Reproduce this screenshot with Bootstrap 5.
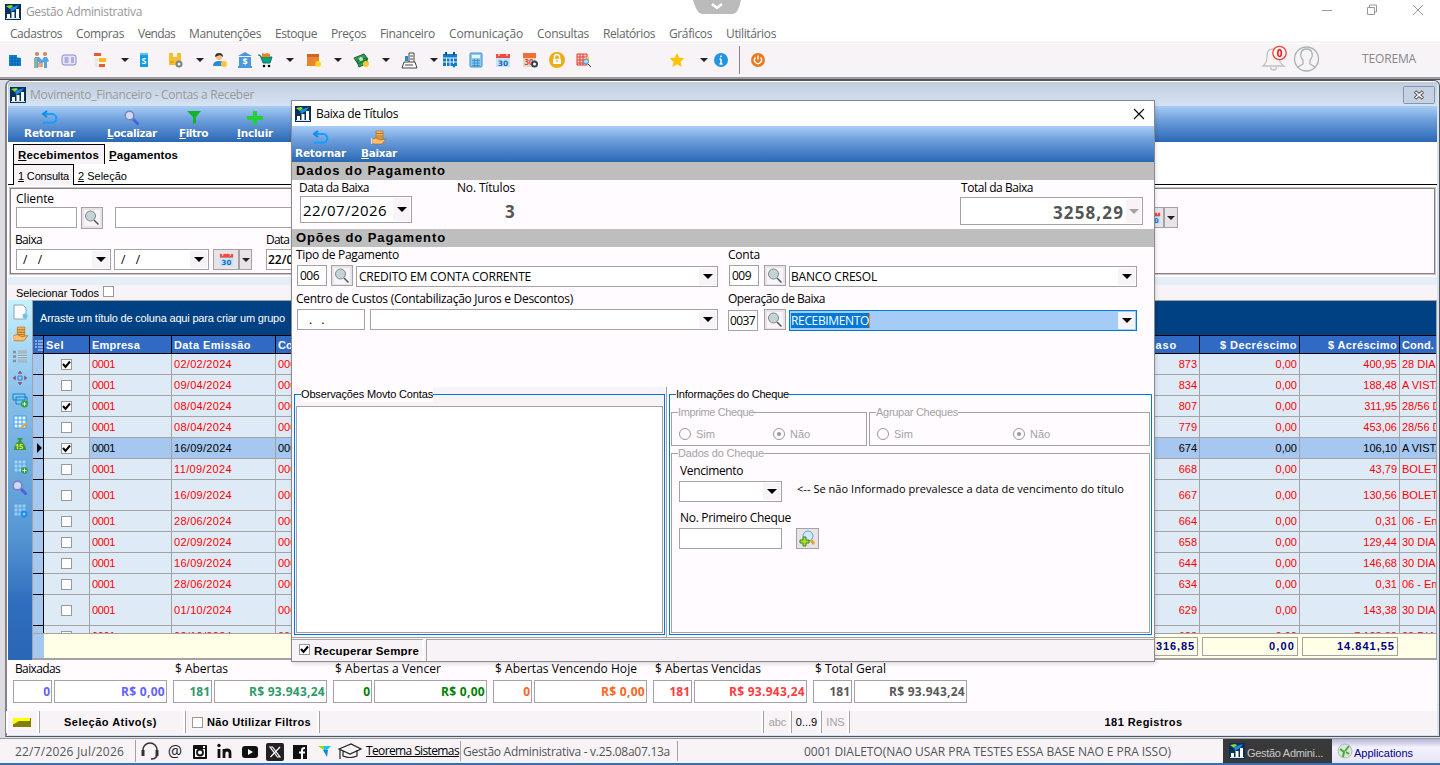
<!DOCTYPE html>
<html lang="pt-BR">
<head>
<meta charset="utf-8">
<title>Gestão Administrativa</title>
<link href="https://cdn.jsdelivr.net/npm/bootstrap@5.3.0/dist/css/bootstrap.min.css" rel="stylesheet">
<style>
body{width:1440px;height:765px;overflow:hidden;background:#fff;color:#000;font:12px/16px "Open Sans","Noto Sans",sans-serif;white-space:nowrap}
svg{display:block;flex:none}
.ms{font-family:"Liberation Sans",sans-serif;font-size:11px}
.pane{background:#f7f3f7}
.pearl{background:#fffbff}
.app-title{height:23px;color:#999}
.menu-row{height:18px;color:#666;padding:3px 0 0 10px;gap:14px}
.tools{height:36px;background:#f7f3f7;box-shadow:inset 0 2px #f7f3f7,inset 0 3px #fff}
.tool-grid{display:grid;grid-template-columns:26px 28px 31px 29px 15px 31px 29px 16px 25px 20px 29px 19px 29px 19px 29px 19px 29px 12px 26px 27px 27px 27px 27px 93px 31px 13px 26px 11px 16px;width:760px;align-items:center;padding:2px 0 0 7px}
.dn{width:0;height:0;border:4px solid transparent;border-top:4px solid #222;border-bottom:0;flex:none}
.frame{height:658px;border-left:5px solid #dcdce2;background:#d6e4f4}
.inner{border:1px solid #555;border-left:2px solid #848488;border-radius:6px 6px 0 0;box-shadow:inset 1px 1px #fff;height:657px;padding:1px 2px 0 1px}
.win-title{height:24px;background:linear-gradient(#c1cddc,#d5e3f4);color:#999}
.blue-bar{height:36px;background:linear-gradient(#a8cdf6,#6c9edb 40%,#2a68b5);color:#fff;font-family:"DejaVu Sans","Open Sans",sans-serif;font-weight:700;font-size:10.5px}
.act{display:flex;flex-direction:column;align-items:center;text-shadow:0 1px 1px #3568a0}
.act span{line-height:15px}
.tab-a{border:1px solid #000;border-bottom:0}
.groove{border:1px solid #848284;outline:1px solid #c8c6c8}
.fld{border:1px solid #a5a2a5;background:#fff;display:flex;align-items:center;flex:none;padding:0 4px;overflow:hidden}
.cbt{background:#f7f3f7;align-self:stretch;display:flex;align-items:center;justify-content:center;width:17px;margin:1px -3px 1px auto;flex:none}
.cbt:before{content:"";border:5px solid transparent;border-top-color:#000;border-bottom:0}
.off .cbt:before{border-top-color:#a5a2a5}
.btx{border:1px solid #a5a2a5;background:#e7e3e7;display:flex;align-items:center;justify-content:center;flex:none}
.chk{width:11px;height:11px;border:1px solid #999;background:#fff;flex:none;display:flex;align-items:center;justify-content:center}
.big{font-family:"Open Sans","Noto Sans",sans-serif;font-weight:700;font-size:17px;color:#555}
.side{width:24px;background:linear-gradient(#c6f1ff,#86bde9 28%,#5596d3 65%,#2e6cbd 85%,#2a68b5);padding-top:1px}
.side div{height:22px;display:flex;align-items:center;justify-content:center}
.grp{height:35px;background:#004184;color:#fff;border-top:1px solid #a5a2a5}
.tr0{display:flex}
.tr0>*{flex:none;border-right:1px solid #a5a2a5;border-bottom:1px solid #a5a2a5;display:flex;align-items:center;overflow:hidden;padding:0 2px}
.hd{height:19px;border-top:1px solid #000;background:#316ac5;color:#fff;font-weight:700}
.hd>*{border-color:#000}
.rw{background:#deebf7;color:#f00}
.rw>:first-child{background:#a5c7f0;border-color:#000}
.c0{width:11px}.c1{width:46px}.c2{width:82px}.c3{width:104px}.c4{width:724px}.c5{width:200px}.c6{width:100px}.c7{width:100px}.c8{width:37px}
.cur{color:#000}.cur>:nth-child(n+3){background:#a5c7f0}
.rows{height:279px;overflow:hidden}
.foot{height:25px;background:#ffffe7;color:#000084;border-top:1px solid #a5a2a5;font-weight:700}
.foot .fld{background:#ffffe7;height:19px;justify-content:flex-end;padding:0 2px}
.sb{border-left:1px solid #a5a2a5;display:flex;align-items:center;justify-content:center;flex:none;height:22px;box-shadow:-2px 0 #fff}
.dlg{position:absolute;left:291px;top:100px;width:864px;height:562px;border:1px solid #8a8a8e;box-shadow:1px 2px 4px #0002}
.sec{height:18px;background:#bdbebd;font:700 13px/17px "Liberation Sans",sans-serif;padding-left:4px}
.fs{border:1px solid #a5a2a5;position:relative}
.fs>.lg{position:absolute;left:6px;top:-8px;line-height:15px;background:#fffbff;color:#a5a2a5}
.fs.bl{border-color:#0078d7}.fs.bl>.lg{color:#000}
.rd{width:12px;height:12px;border:1px solid #999;border-radius:50%;flex:none;display:flex;align-items:center;justify-content:center}
.rd.on:after{content:"";width:4px;height:4px;border-radius:50%;background:#999}
.taskbar{height:27px;background:#f7f3f7;border-top:1px solid #999;border-bottom:2px solid #3970b8;color:#555}
</style>
</head>
<body>
<svg width="0" height="0" class="position-absolute">
<symbol id="logo" viewBox="0 0 16 16"><path fill="#07305c" d="M0 0h16v16H0z"/><path fill="#fff" d="M2 10h3v4H2zM6.500 8h3v6h-3zM11 5h3v9h-3z"/><path d="M1 2l5-1 2 1-3 3z" fill="#8ddb28"/><path d="M5 4l6-2 3-1-3 4-5 3z" fill="#1b8be0"/><path d="M1 14.500h14" stroke="#dbe7f5"/></symbol>
<symbol id="ret" viewBox="0 0 16 14"><path d="M3 3h7a4.300 4.300 0 010 8.700H1" fill="none" stroke="#13a0ff" stroke-width="2"/><path d="M5 0L1 3l4 3" fill="none" stroke="#1188ee" stroke-width="2"/></symbol>
<symbol id="mag" viewBox="0 0 16 16"><path d="M9 9l5.500 5.500" stroke="#4f62d8" stroke-width="3"/><circle cx="5.500" cy="5.500" r="4.300" fill="#d3d8f8" stroke="#7b83b8" stroke-width="1.500"/></symbol>
<symbol id="mg2" viewBox="0 0 16 16"><path d="M0 0h16v16H0z" fill="#f7f5f7"/><path d="M10 10l4.500 4.500" stroke="#555" stroke-width="1.500"/><circle cx="6.500" cy="6" r="5" fill="#c5d3d6" stroke="#7d898c"/></symbol>
<symbol id="hand" viewBox="0 0 16 16"><path d="M5 1h7v9H5z" fill="#f4b556" stroke="#a86a20" stroke-width=".6"/><path d="M5 3.500h7M5 6h7M5 8h7" stroke="#b87322"/><path d="M1 9l4-1 4 2 6-1-4 5H3L1 13z" fill="#ffbf6b" stroke="#9b6023" stroke-width=".6"/><path d="M.5 8v6" stroke="#dde" stroke-width="1.500"/></symbol>
<symbol id="cal" viewBox="0 0 16 16"><path d="M1 3h14v12H1z" fill="#c3e3ff"/><path d="M1 2h14v4H1z" fill="#ef4b3e"/><path d="M4 1v3M12 1v3" stroke="#fff"/><text x="8" y="13.500" font-size="7.500" font-weight="700" text-anchor="middle" fill="#1769ba" font-family="DejaVu Sans">30</text></symbol>
<symbol id="tbl" viewBox="0 0 16 16"><path d="M2 2h12v12H2zM2 6h12M2 10h12M6 2v12M10 2v12" fill="#e8f6ff" stroke="#41a3e8"/></symbol>
<symbol id="gcal" viewBox="0 0 16 16"><path d="M1 2h14v12H1z" fill="#1679c8"/><path d="M1 6h14M4.500 6v8M8 6v8M11.500 6v8M1 10h14" stroke="#e0f2ff"/><path d="M4 0v3M12 0v3" stroke="#0b4d94" stroke-width="2"/><path d="M9 12h6l-3 4z" fill="#087fc4"/></symbol>
</svg>

<header>
 <div class="app-title d-flex align-items-center" style="padding-left:5px">
  <svg width="16" height="16"><use href="#logo"/></svg><span data-w="116" style="margin-left:5px">Gestão Administrativa</span>
  <svg class="ms-auto" width="752" height="23" viewBox="0 0 752 23" fill="none" stroke="#999"><path d="M5 0h48q-3 14-8 14H14q-5 0-9-14z" fill="#bbb" stroke="none"/><path d="M24 4l5 4 5-4" stroke="#fff" stroke-width="2.500"/><path d="M634 10.500h10M679.500 7.500h7v7h-7zM681.500 7v-2h7v7h-2M725 5l10 10M735 5l-10 10"/></svg>
 </div>
 <nav class="menu-row d-flex align-items-center" id="menu"></nav>
 <div class="tools d-flex align-items-center">
  <div class="tool-grid">
   <svg width="16" height="16"><path d="M2 3h8v3h4v8H2z" fill="#1088dd"/><path d="M2 6h11M2 9h12M2 12h12M5 3v11M8 3v11M11 6v8" stroke="#0b4e8d" stroke-width=".6"/></svg>
   <svg width="17" height="18"><circle cx="4" cy="3" r="2" fill="#c88a50"/><circle cx="12" cy="3" r="2" fill="#c88a50"/><path d="M2 6h4l3 3 2-3h3l2 4-2 1v6h-3v-6l-3 2-3-2v6H1z" fill="#5aa3dc"/><path d="M1 7h3v10H1z" fill="#91b39c"/><path d="M5 12h5v4H5z" fill="#e9a577"/></svg>
   <svg width="16" height="16"><rect x="1" y="3" width="14" height="10" rx="2" fill="#e5e4fb" stroke="#8b8bd0"/><path d="M3.500 6h4M3.500 8h4M3.500 10h4M10 6h3M10 8h3M10 10h3" stroke="#7777c3"/></svg>
   <svg width="16" height="16"><path d="M2 1h7v3H2zM7 12h6v3H7z" fill="#e9592b"/><path d="M7 6h7v4H7z" fill="#ffb817"/><path d="M4 5v9h3M4 8h3" fill="none" stroke="#ddd"/></svg>
   <i class="dn"></i>
   <svg width="16" height="16"><path d="M4 1h8v14H4z" fill="#149ae6"/><path d="M4 1h8v2H4z" fill="#54c3ff"/><text x="8" y="12" font-size="9" font-weight="700" text-anchor="middle" fill="#fff">S</text></svg>
   <svg width="16" height="16"><path d="M2 1h4v4h4V1h4v12H2z" fill="#f6c02c"/><path d="M3 10h4" stroke="#d58c00"/><circle cx="12" cy="12" r="2.500" fill="#eee" stroke="#76828d" stroke-width="2"/></svg>
   <i class="dn"></i>
   <svg width="16" height="16"><circle cx="7" cy="5" r="3" fill="#ffbe78"/><path d="M3 5q0-4 4-4t4 4L8 3z" fill="#333"/><path d="M1 14q0-5 6-5t6 5z" fill="#2d88d8"/><circle cx="12" cy="12" r="3" fill="#ffc534"/></svg>
   <svg width="16" height="16"><path d="M8 0l7 4H1zM2 5h12v9H2zM1 14h14v2H1z" fill="#4a99df"/><text x="8" y="13" font-size="9" font-weight="700" text-anchor="middle" fill="#fff">$</text></svg>
   <svg width="16" height="16"><path d="M1 3h2l3 8h7l2-6H4" fill="#0aa183" stroke="#087b68"/><path d="M5 1l3 1 2-1 3 1v3H5z" fill="#ee8321"/><circle cx="7" cy="14" r="1.300"/><circle cx="12" cy="14" r="1.300"/></svg>
   <i class="dn"></i>
   <svg width="16" height="16"><path d="M2 2h12v12H2z" fill="#ea842e"/><path d="M2 2h12v3H2z" fill="#ca6528"/><circle cx="13" cy="12" r="3" fill="#ffd32c"/></svg>
   <i class="dn"></i>
   <svg width="17" height="16"><path d="M1 6l10-4 4 5-10 5zM4 9l9-3 2 5-9 4z" fill="#329b54" stroke="#146735"/><circle cx="8" cy="7" r="2" fill="#bde9bf"/><circle cx="13" cy="12" r="3" fill="#ffc534"/></svg>
   <i class="dn"></i>
   <svg width="17" height="17"><path d="M3 10h11l2 6H1zM8 10V1h5v9M9 4h3M9 7h3M4 13h8" fill="#fff" stroke="#444"/><path d="M4 4h3v5H4z" fill="#238bd2"/></svg>
   <i class="dn"></i>
   <svg width="16" height="16"><use href="#gcal"/></svg>
   <svg width="16" height="16"><rect x="2" y="1" width="12" height="14" rx="1" fill="#8bc9ef" stroke="#3f91cc"/><path d="M4 3h8v3H4z" fill="#e6f6ff"/><path d="M4 8.500h8M4 11h8M4 13.500h8M6.500 7v8M9.500 7v8" stroke="#2d80bd" stroke-width=".7"/></svg>
   <svg width="16" height="16"><use href="#cal"/></svg>
   <svg width="17" height="16"><path d="M1 3h13v12H1z" fill="#e2d8d0"/><path d="M1 1h13v5H1z" fill="#ef6f35"/><text x="7" y="13" font-size="8" font-weight="700" text-anchor="middle" fill="#e7492f">30</text><circle cx="12.500" cy="12" r="2.500" fill="#fff" stroke="#344552" stroke-width="2"/></svg>
   <svg width="16" height="16"><circle cx="8" cy="8" r="8" fill="#efad13"/><rect x="4" y="7" width="8" height="5" fill="#fff"/><path d="M5.500 7V5a2.500 2.500 0 015 0v2" fill="none" stroke="#fff" stroke-width="1.500"/><path d="M8 8v2" stroke="#d58c00"/></svg>
   <svg width="17" height="16"><path d="M1 2h10v11H1zM1 5h10M1 8h10M1 11h10M4 2v11M7 2v11" fill="#ffd6ce" stroke="#df3d30"/><path d="M11 11l4 4" stroke="#333"/><path d="M10 5h3v6h-3z" fill="#ffc534"/><circle cx="10" cy="9.500" r="2.500" fill="#afdaff" stroke="#4e91ce"/></svg>
   <svg width="16" height="16"><path d="M8 1l2.200 4.800 5.300.5-4 3.500 1.200 5.200L8 12.300 3.300 15l1.200-5.200-4-3.500 5.300-.5z" fill="#ffc400"/></svg>
   <i class="dn"></i>
   <svg width="16" height="16"><circle cx="8" cy="8" r="7" fill="#2493e0"/><path d="M8 7v5M6.500 12h3M6.500 7H8M8 3.500v1.800" stroke="#fff" stroke-width="1.500"/></svg>
   <div style="width:1px;height:28px;background:#888"></div>
   <svg width="16" height="16"><circle cx="8" cy="8" r="7" fill="#ea7a1d"/><path d="M5.500 5.500a3.500 3.500 0 105 0M8 3.500v4" fill="none" stroke="#fff" stroke-width="1.400"/></svg>
  </div>
  <svg class="ms-auto" width="60" height="30" viewBox="1 0 60 30" fill="none" stroke="#bfc5c7" stroke-width="1.300" style="margin-right:41px"><path d="M3 22q4-3 4-10 0-7 6-7t6 7q0 7 5 10zM10.500 23a3 3 0 006 0" /><circle cx="19.500" cy="9" r="6.700" fill="#fff" stroke="#ef4438"/><text x="19.500" y="12.500" font-size="10" font-weight="700" fill="#f00" stroke="none" text-anchor="middle">0</text><circle cx="46.500" cy="15" r="12" stroke="#a9b3b6"/><path d="M38 23l5-3v-4q-3-3-2-7 1-4 5.500-4t5.500 4q1 4-2 7v4l5 3" stroke="#a9b3b6"/></svg>
  <span data-w="54" style="color:#888;margin-right:24px">TEOREMA</span>
 </div>
</header>

<div style="height:3px;background:#555;border-top:2px solid #9c9a9e"></div>
<main class="frame">
<div class="inner">
 <div class="win-title d-flex align-items-center" style="padding:1px 0 0 2px">
  <svg width="16" height="16" class="me-1"><use href="#logo"/></svg><span data-w="224">Movimento_Financeiro - Contas a Receber</span>
  <svg class="ms-auto" width="34" height="20" viewBox="0 0 34 20"><rect x=".5" y="1.500" width="31" height="17" rx="1" fill="#c4d2e3" stroke="#8495ae"/><path d="M12 6.500l8 7M20 6.500l-8 7" stroke="#555" stroke-width="3.600"/><path d="M12.500 7l7 6M19.500 7l-7 6" stroke="#fff" stroke-width="1.600"/></svg>
 </div>
 <div class="blue-bar d-flex">
  <div class="act" style="width:83px"><svg class="mt-1" width="16" height="16"><use href="#ret"/></svg><span data-w="51">Retornar</span></div>
  <div class="act" style="width:82px"><svg class="mt-1" width="16" height="16"><use href="#mag"/></svg><span data-w="50"><u>L</u>ocalizar</span></div>
  <div class="act" style="width:41px"><svg class="mt-1" width="16" height="16"><path d="M1 1h14L10 7v6l-3 1V7z" fill="#10b52a"/></svg><span data-w="29"><u>F</u>iltro</span></div>
  <div class="act" style="width:82px"><svg class="mt-1" width="16" height="16"><path d="M6 1h4v5h6v4h-6v5H6v-5H0V6h6z" fill="#20d232"/></svg><span data-w="36"><u>I</u>ncluir</span></div>
 </div>
 <div class="bg-white" style="height:43px;border-bottom:1px solid #000">
  <div class="d-flex fw-bold ms" style="padding:2px 0 0 5px;height:22px;font-size:11.5px"><div class="tab-a pane" style="width:92px;padding:2px 0 0 4px"><span data-w="81"><u>R</u>ecebimentos</span></div><div class="ms-1" style="padding-top:3px"><span data-w="69"><u>P</u>agamentos</span></div></div>
  <div class="d-flex ms" style="padding:0 0 0 5px;height:21px"><div class="tab-a pane" style="width:61px;padding:3px 0 0 4px;height:21px"><span data-w="51"><u>1</u> Consulta</span></div><div class="ms-1" style="padding-top:4px"><span data-w="49"><u>2</u> Seleção</span></div></div>
 </div>
 <div class="pearl" style="height:92px;padding:3px 2px 0 2px">
  <div class="groove" style="height:86px;padding:2px 0 0 5px">
   <div style="height:16px"><span data-w="38">Cliente</span></div>
   <div class="d-flex"><div class="fld" style="width:61px;height:21px"></div><div class="btx" style="width:22px;height:22px;margin:0 12px 0 4px"><svg width="16" height="16"><use href="#mg2"/></svg></div><div class="fld" style="width:400px;height:21px"></div>
    <div class="btx" style="width:21px;height:21px;margin-left:628px"><svg width="14" height="14"><use href="#cal"/></svg></div><div class="btx" style="width:14px;height:21px"><i class="dn"></i></div></div>
   <div class="d-flex" style="height:20px;padding-top:3px;line-height:15px"><span data-w="27" style="margin-left:-1px">Baixa</span><span style="margin-left:224px" data-w="23">Data</span></div>
   <div class="d-flex"><div class="fld" style="width:95px;height:21px"><span style="margin-left:2px;word-spacing:2px">/ &nbsp;/</span><div class="cbt"></div></div><div class="fld" style="width:95px;height:21px;margin:0 4px 0 3px"><span style="margin-left:2px;word-spacing:2px">/ &nbsp;/</span><div class="cbt"></div></div><div class="btx" style="width:26px;height:21px"><svg width="15" height="15"><use href="#cal"/></svg></div><div class="btx" style="width:13px;height:21px"><i class="dn"></i></div><div class="fld" style="width:95px;height:21px;margin-left:14px;padding:0 1px;font-weight:600">22/07/2026</div></div>
  </div>
 </div>
 <div style="height:8px;background:#e6eef8"></div>
 <div class="pane ms d-flex align-items-center" style="height:15px;padding-left:8px"><span data-w="83">Selecionar Todos</span><i class="chk ms-1" style="margin-top:-3px"></i></div>
 <div class="d-flex" style="height:360px">
  <div class="side">
   <div><svg width="16" height="16"><path d="M2 1h9l3 3v11H2z" fill="#fff" stroke="#8ea2b4"/><circle cx="13" cy="12" r="2.500" fill="#6ec0ee"/></svg></div>
   <div><svg width="17" height="17"><use href="#hand"/></svg></div>
   <div><svg width="16" height="14"><path d="M1 3h3M1 7.500h3M1 12h3M6 3h9M6 7.500h9M6 12h9" stroke="#8a9096" stroke-width="2.500"/><path d="M6 3h9M6 7.500h9M6 12h9" stroke="#fff" stroke-width=".7"/></svg></div>
   <div><svg width="16" height="16" stroke="#4d74ca" fill="#88506e"><path d="M6 6h4v4H6z" fill="none"/><path d="M8 1l2 2.500H6zM8 15l2-2.500H6zM1 8l2.500-2v4zM15 8l-2.500-2v4z" stroke="#88506e" stroke-width=".5"/></svg></div>
   <div><svg width="16" height="16"><path d="M1 2h12v6H1zM4 5h11v7H4z" fill="#80c7f2" stroke="#167ecb"/><circle cx="12.500" cy="12" r="3.500" fill="#2aa336"/><path d="M10.500 12h4M12.500 10v4" stroke="#fff"/></svg></div>
   <div><svg width="16" height="16"><use href="#tbl"/><path d="M9 14l6-5" stroke="#f2a02c" stroke-width="2"/></svg></div>
   <div><svg width="16" height="16"><path d="M5 2h6L9 5q5 4 5 9H2q0-6 5-9z" fill="#2e9d3e"/><text x="3" y="13" font-size="7" font-weight="700" fill="#ffe23c">15</text></svg></div>
   <div><svg width="16" height="16"><use href="#tbl" opacity=".5"/><circle cx="12.500" cy="12.500" r="3.300" fill="#2aa336"/><path d="M10.500 12.500h4M12.500 10.500v4" stroke="#fff"/></svg></div>
   <div><svg width="16" height="16"><use href="#mag"/></svg></div>
   <div><svg width="16" height="16"><use href="#tbl" opacity=".5"/><circle cx="12" cy="12" r="2.500" fill="none" stroke="#168ef2" stroke-width="1.800"/></svg></div>
  </div>
  <div class="flex-grow-1 overflow-hidden ms" style="width:1404px;border:1px solid #a5a2a5;border-width:0 1px 2px 1px">
   <div class="grp d-flex align-items-center" style="padding-left:7px"><span data-w="245">Arraste um título de coluna aqui para criar um grupo</span></div>
   <div class="tr0 hd"><div class="c0"><svg width="8" height="12"><path d="M0 2h2M3 2h5M0 5h2M3 5h5M0 8h2M3 8h5M3 11h5" stroke="#dce8ff"/></svg></div><div class="c1"><span data-w="18">Sel</span></div><div class="c2"><span data-w="48">Empresa</span></div><div class="c3"><span data-w="77">Data Emissão</span></div><div class="c4"><span>Conta</span></div><div class="c5 justify-content-end" style="padding-right:22px"><span data-w="40">Atraso</span></div><div class="c6 justify-content-end"><span data-w="77">$ Decréscimo</span></div><div class="c7 justify-content-end"><span data-w="69">$ Acréscimo</span></div><div class="c8"><span data-w="32">Cond.</span></div></div>
   <div class="rows" id="rows"></div>
   <div class="foot d-flex align-items-center"><div style="width:11px;height:24px;background:#a5c7f0"></div><div class="fld" style="width:194px;margin-left:960px"><span data-w="39">316,85</span></div><div class="fld" style="width:96px;margin:0 4px"><span data-w="26">0,00</span></div><div class="fld" style="width:96px"><span data-w="58">14.841,55</span></div></div>
  </div>
 </div>
 <div class="pearl d-flex" style="height:51px;padding:1px 0 0 5px;gap:6px" id="totals"></div>
 <div class="pane ms d-flex" style="height:24px;font-weight:700">
  <div class="sb" style="width:28px;border:0"><svg width="18" height="9"><path d="M0 0h18v9H0z" fill="#7f8000"/><path d="M0 0h17v3H6L1 6H0z" fill="#ff0"/></svg></div>
  <div class="sb" style="width:146px;margin-left:3px;padding-right:4px"><span data-w="93">Seleção Ativo(s)</span></div>
  <div class="sb justify-content-start" style="width:134px;padding-left:6px"><i class="chk me-1"></i><span data-w="104">Não Utilizar Filtros</span></div>
  <div class="sb" style="width:444px"></div>
  <div class="sb fw-normal" style="width:28px;color:#a5a2a5">abc</div><div class="sb fw-normal" style="width:30px">0...9</div><div class="sb fw-normal" style="width:28px;color:#a5a2a5">INS</div>
  <div class="sb flex-grow-1"><span data-w="78">181 Registros</span></div>
 </div>
</div>
</main>

<footer class="taskbar d-flex align-items-center">
 <div style="width:136px;border-right:1px solid #a5a2a5;padding-left:15px;height:22px;line-height:24px"><span data-w="109">22/7/2026 Jul/2026</span></div>
 <svg width="228" height="22" viewBox="136 0 228 22"><g fill="none" stroke="#333" stroke-width="1.600"><path d="M143 15v-5a7 7 0 0114 0v5M157 14q0 5-6 5"/><path d="M143 10v6M157 10v6" stroke-width="3"/></g><text x="175" y="17" font-size="16" text-anchor="middle" fill="#222">@</text><rect x="193" y="5" width="14" height="14" rx="1" fill="#111"/><path d="M195 9h10v8h-10z" fill="#fff"/><circle cx="200" cy="12.500" r="3" fill="#fff" stroke="#111" stroke-width="1.800"/><path d="M203 7h2" stroke="#fff" stroke-width="2"/><path d="M219 9v9M224 18V9m0 4q0-3 3-3t3 3v5" fill="none" stroke="#111" stroke-width="2.800"/><circle cx="219" cy="5.500" r="1.700" fill="#111"/><rect x="242" y="6" width="16" height="12" rx="3" fill="#111"/><path d="M248 9l5 3-5 3z" fill="#fff"/><rect x="266" y="3" width="18" height="18" rx="2" fill="#222"/><path d="M270 7h2.500l7.500 10h-2.500zM280 7l-9.500 10" fill="none" stroke="#fff" stroke-width="1.200"/><path d="M293 5h14v14h-14z" fill="#111"/><path d="M302 19v-9q0-2 3-2M299 12.500h6" fill="none" stroke="#fff" stroke-width="2"/><path d="M318 6h6v4z" fill="#8be000"/><path d="M324 6h7l-4 4h-3z" fill="#17c8e8"/><path d="M323 10h5l-1 7z" fill="#1584df"/><path d="M339 9l12-5 10 5-11 5zM343 11v5q7 3 14 0v-6M340 10v9" fill="none" stroke="#222" stroke-width="1.200"/></svg>
 <span data-w="93" class="text-black text-decoration-underline" style="margin-left:2px">Teorema Sistemas</span>
 <div style="border-left:1px solid #a5a2a5;margin-left:1px;padding-left:2px;width:217px;height:20px;line-height:22px"><span data-w="207">Gestão Administrativa - v.25.08a07.13a</span></div>
 <div style="border-left:1px solid #a5a2a5;width:546px;height:20px;line-height:22px;padding-left:126px"><span data-w="367">0001 DIALETO(NAO USAR PRA TESTES ESSA BASE NAO E PRA ISSO)</span></div>
 <div class="d-flex align-items-center ms" style="width:109px;height:24px;background:#393939;color:#c8c8c8;padding:0 0 0 6px"><svg width="16" height="16"><use href="#logo"/></svg><span data-w="76" style="margin:3px 0 0 2px">Gestão Admini...</span></div>
 <div class="d-flex align-items-center ms flex-grow-1" style="height:24px;background:linear-gradient(#b4b4d8,#f4f2fc 35%,#e8e6f6);color:#000084;padding-left:5px"><svg width="16" height="16"><circle cx="8" cy="8" r="7" fill="#dde5dd" stroke="#b1b9b1"/><path d="M3 6l4 3-1 5M8 8l4-5M9 9l3 2" fill="none" stroke="#46a83d" stroke-width="2"/></svg><span data-w="59" style="margin:3px 0 0 1px">Applications</span></div>
</footer>

<section class="dlg pearl">
 <div class="bg-white d-flex align-items-center" style="height:25px;padding-left:3px"><svg width="16" height="16"><use href="#logo"/></svg><span data-w="82" style="margin-left:5px">Baixa de Títulos</span><svg class="ms-auto" width="12" height="12" style="margin-right:9px" stroke="#000" stroke-width="1.100"><path d="M1 1l10 10M11 1L1 11"/></svg></div>
 <div class="blue-bar d-flex"><div class="act" style="width:57px"><svg class="mt-1" width="16" height="16"><use href="#ret"/></svg><span data-w="51">Retornar</span></div><div class="act" style="width:60px"><svg class="mt-1" width="16" height="16"><use href="#hand"/></svg><span data-w="36"><u>B</u>aixar</span></div></div>
 <div class="sec"><span data-w="150">Dados do Pagamento</span></div>
 <div class="d-flex" style="height:49px">
  <div style="width:157px;padding-left:8px"><div style="height:16px;margin-left:-1px"><span data-w="70">Data da Baixa</span></div><div class="fld" style="width:112px;height:27px;font-size:15px;padding-left:2px"><span data-w="84">22/07/2026</span><div class="cbt"></div></div></div>
  <div style="width:511px;padding-left:8px"><div style="height:16px"><span data-w="58">No. Títulos</span></div><div class="big" style="line-height:32px;padding-left:48px">3</div></div>
  <div><div style="height:17px;padding-left:1px"><span data-w="72">Total da Baixa</span></div><div class="fld off justify-content-end" style="width:183px;height:28px;padding-left:2px"><span data-w="71" class="ms-auto big" style="line-height:28px;padding-top:4px;margin-right:2px">3258,29</span><div class="cbt ms-0" style="width:15px"></div></div></div>
 </div>
 <div class="sec"><span data-w="150">Opões do Pagamento</span></div>
 <div class="d-flex" style="height:140px;padding-left:4px">
  <div style="width:432px"><div style="height:18px"><span data-w="103">Tipo de Pagamento</span></div>
   <div class="d-flex"><div class="fld" style="width:30px;height:21px;margin-left:1px;padding:0 2px"><span data-w="19">006</span></div><div class="btx" style="width:22px;height:21px;margin:0 3px 0 4px"><svg width="16" height="16"><use href="#mg2"/></svg></div><div class="fld" style="width:362px;height:21px;margin-top:1px;padding-left:2px"><span data-w="172">CREDITO EM CONTA CORRENTE</span><div class="cbt"></div></div></div>
   <div style="height:22px;padding-top:4px"><span data-w="277">Centro de Custos (Contabilização Juros e Descontos)</span></div>
   <div class="d-flex"><div class="fld" style="width:68px;height:21px;margin:0 5px 0 1px"><span style="padding-left:7px;word-spacing:6px">. .</span></div><div class="fld" style="width:348px;height:21px"><div class="cbt"></div></div></div></div>
  <div><div style="height:18px"><span data-w="32">Conta</span></div>
   <div class="d-flex"><div class="fld" style="width:30px;height:21px;margin-left:1px;padding:0 2px"><span data-w="19">009</span></div><div class="btx" style="width:22px;height:21px;margin:0 3px 0 5px"><svg width="16" height="16"><use href="#mg2"/></svg></div><div class="fld" style="width:348px;height:21px;margin-top:1px;padding-left:1px"><span data-w="86">BANCO CRESOL</span><div class="cbt"></div></div></div>
   <div style="height:22px;padding-top:4px"><span data-w="97">Operação de Baixa</span></div>
   <div class="d-flex"><div class="fld" style="width:30px;height:21px;margin-top:1px;padding:0 1px"><span data-w="25">0037</span></div><div class="btx" style="width:22px;height:21px;margin:0 3px 0 6px"><svg width="16" height="16"><use href="#mg2"/></svg></div><div class="fld" style="width:348px;height:21px;margin-top:1px;background:#a5cbf7;border-color:#0078d7;padding-left:1px"><span data-w="78" style="background:#0078d7;color:#fff;border-right:1px solid #f80;line-height:15px">RECEBIMENTO</span><div class="cbt"></div></div></div></div>
 </div>
 <div class="d-flex ms" style="height:250px">
  <div class="pane" style="width:375px;border-right:1px solid #a5a2a5;padding:7px 1px 0 2px"><div class="fs bl" style="height:241px;padding:11px 1px 1px"><span class="lg pane" data-w="132">Observações Movto Contas</span><div class="bg-white" style="height:227px;border:1px solid #a5a2a5"></div></div></div>
  <div class="flex-grow-1" style="padding:7px 2px 0"><div class="fs bl" style="height:241px;padding:17px 1px 1px"><span class="lg" data-w="113">Informações do Cheque</span>
   <div class="d-flex" style="gap:2px;color:#a5a2a5"><div class="fs" style="width:196px;height:34px;padding:13px 0 0 7px"><span class="lg" data-w="76">Imprime Cheque</span><div class="d-flex align-items-center"><i class="rd"></i><span style="margin-left:5px;width:77px">Sim</span><i class="rd on"></i><span style="margin-left:5px">Não</span></div></div>
    <div class="fs flex-grow-1" style="height:34px;padding:13px 0 0 7px"><span class="lg" data-w="82">Agrupar Cheques</span><div class="d-flex align-items-center"><i class="rd"></i><span style="margin-left:5px;width:119px">Sim</span><i class="rd on"></i><span style="margin-left:5px">Não</span></div></div></div>
   <div class="fs" style="height:180px;margin-top:7px;padding:9px 0 0 7px;font:12px/16px 'Open Sans'"><span class="lg ms m-0" data-w="86">Dados do Cheque</span>
    <div style="height:18px;padding-left:1px"><span data-w="63">Vencimento</span></div>
    <div class="d-flex"><div class="fld" style="width:103px;height:21px"><div class="cbt"></div></div><span data-w="327" style="font-size:11px;margin-left:15px">&lt;-- Se não Informado prevalesce a data de vencimento do título</span></div>
    <div style="height:26px;padding:8px 0 0 1px"><span data-w="111">No. Primeiro Cheque</span></div>
    <div class="d-flex"><div class="fld" style="width:103px;height:21px"></div><div class="btx" style="width:23px;height:21px;margin-left:14px"><svg width="17" height="17"><circle cx="9" cy="6" r="5" fill="#cfeaff" stroke="#6aa3cd"/><path d="M12 10l3 4" stroke="#e6a13a" stroke-width="3"/><path d="M4 7h3v3h3v3H7v3H4v-3H1v-3h3z" fill="#a9df28" stroke="#39861a"/></svg></div></div>
   </div></div></div>
 </div>
 <div class="pane d-flex ms" style="height:24px;border-top:1px solid #a5a2a5;padding-top:1px"><div style="border-top:1px solid #a5a2a5;width:132px;padding:4px 0 0 7px;overflow:hidden;border-right:2px solid #fff" class="d-flex"><i class="chk"><svg width="9" height="9"><path d="M1 4l2.500 3L8 1.500" fill="none" stroke="#000" stroke-width="2"/></svg></i><span data-w="105" style="margin-left:4px;font-weight:700;line-height:14px;height:12px;overflow:hidden;font-size:11.5px">Recuperar Sempre</span></div><div class="flex-grow-1" style="border:1px solid #a5a2a5;border-width:1px 0 0 1px;margin-left:2px"></div></div>
</section>

<script>
const el = id => document.getElementById(id);
// menu entries with their drawn widths
el('menu').innerHTML = [['Cadastros',52],['Compras',48],['Vendas',37],['Manutenções',72],['Estoque',42],['Preços',35],['Financeiro',55],['Comunicação',74],['Consultas',52],['Relatórios',52],['Gráficos',43],['Utilitários',50]]
  .map(([t,w]) => `<span style="width:${w}px" data-w="${w}">${t}</span>`).join('');
// grid rows: checked, date, days late, increase, payment terms, height
const tick = '<svg width="9" height="9"><path d="M1 4l2.500 3L8 1.500" fill="none" stroke="#000" stroke-width="2"/></svg>';
el('rows').innerHTML = [[1,'02/02/2024','873','400,95','28 DIAS',21],[0,'09/04/2024','834','188,48','A VISTA',21],[1,'08/04/2024','807','311,95','28/56 DIAS',21],[0,'08/04/2024','779','453,06','28/56 DIAS',21],[1,'16/09/2024','674','106,10','A VISTA',21],[0,'11/09/2024','668','43,79','BOLETO',21],[0,'16/09/2024','667','130,56','BOLETO',31],[0,'28/06/2024','664','0,31','06 - Entrada',21],[0,'02/09/2024','658','129,44','30 DIAS',21],[0,'16/09/2024','644','146,68','30 DIAS',21],[0,'28/06/2024','634','0,31','06 - Entrada',21],[0,'01/10/2024','629','143,38','30 DIAS',31],[0,'02/10/2024','628','7.128,82','28 DIAS',21]]
  .map((r,i) => `<div class="tr0 rw ${i==4?'cur':''}" style="height:${r[5]}px"><div class="c0">${i==4?'<svg width="7" height="10" style="margin-left:1px"><path d="M1 0l5 5-5 5z"/></svg>':''}</div><div class="c1 justify-content-center"><i class="chk">${r[0]?tick:''}</i></div><div class="c2"><span data-w="23">0001</span></div><div class="c3"><span data-w="58">${r[1]}</span></div><div class="c4">000000</div><div class="c5 justify-content-end">${r[2]}</div><div class="c6 justify-content-end">0,00</div><div class="c7 justify-content-end">${r[3]}</div><div class="c8">${r[4]}</div></div>`).join('');
// totals strip
el('totals').innerHTML = [['Baixadas',45,'0','R$ 0,00','#6361ff'],['$ Abertas',53,'181','R$ 93.943,24','#319a6b'],['$ Abertas a Vencer',106,'0','R$ 0,00','#008200'],['$ Abertas Vencendo Hoje',142,'0','R$ 0,00','#ff6521'],['$ Abertas Vencidas',106,'181','R$ 93.943,24','#ff3c42'],['$ Total Geral',71,'181','R$ 93.943,24','#5a5a5a']]
  .map(t => `<div style="width:154px"><div style="height:19px;padding-left:2px"><span data-w="${t[1]}">${t[0]}</span></div><div class="d-flex fw-bold" style="gap:2px;color:${t[4]}"><div class="fld justify-content-end" style="width:39px;height:23px;padding:0 1px">${t[2]}</div><div class="fld justify-content-end" style="width:113px;height:23px;padding:0 1px"><span data-w="${t[3].length>8?76:44}">${t[3]}</span></div></div></div>`).join('');
// track every label to its set width
document.querySelectorAll('[data-w]').forEach(s => {
  const r = document.createRange(); r.selectNodeContents(s);
  s.style.letterSpacing = ((s.dataset.w - r.getBoundingClientRect().width) / s.textContent.length).toFixed(3) + 'px';
});
</script>
<script src="https://cdn.jsdelivr.net/npm/bootstrap@5.3.0/dist/js/bootstrap.bundle.min.js"></script>
</body>
</html>
